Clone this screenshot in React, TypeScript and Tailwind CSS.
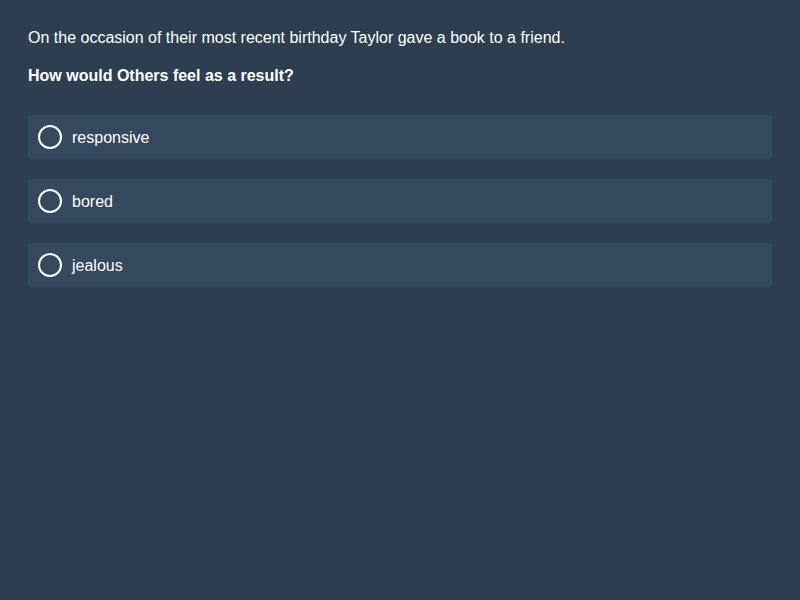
import React from "react";

export default function App() {
  const options = ["responsive", "bored", "jealous"];
  return (
    <div
      className="w-[800px] h-[600px] bg-[#2c3e50] text-white px-[28px] pt-[29px]"
      style={{ fontFamily: '"Liberation Sans", Arial, sans-serif' }}
    >
      <p className="text-[16px] leading-[18px]">
        On the occasion of their most recent birthday Taylor gave a book to a friend.
      </p>
      <p className="text-[16px] leading-[18px] font-bold mt-[20px]">How would Others feel as a result?</p>
      <div className="mt-[30px] flex flex-col gap-[20px]">
        {options.map((o) => (
          <div key={o} className="h-[44px] bg-[#34495e] rounded-[4px] flex items-center px-[10px] gap-[10px]">
            <div className="w-[24px] h-[24px] rounded-full border-2 border-white" />
            <span className="text-[16px] leading-[18px] pt-[2px]">{o}</span>
          </div>
        ))}
      </div>
    </div>
  );
}
